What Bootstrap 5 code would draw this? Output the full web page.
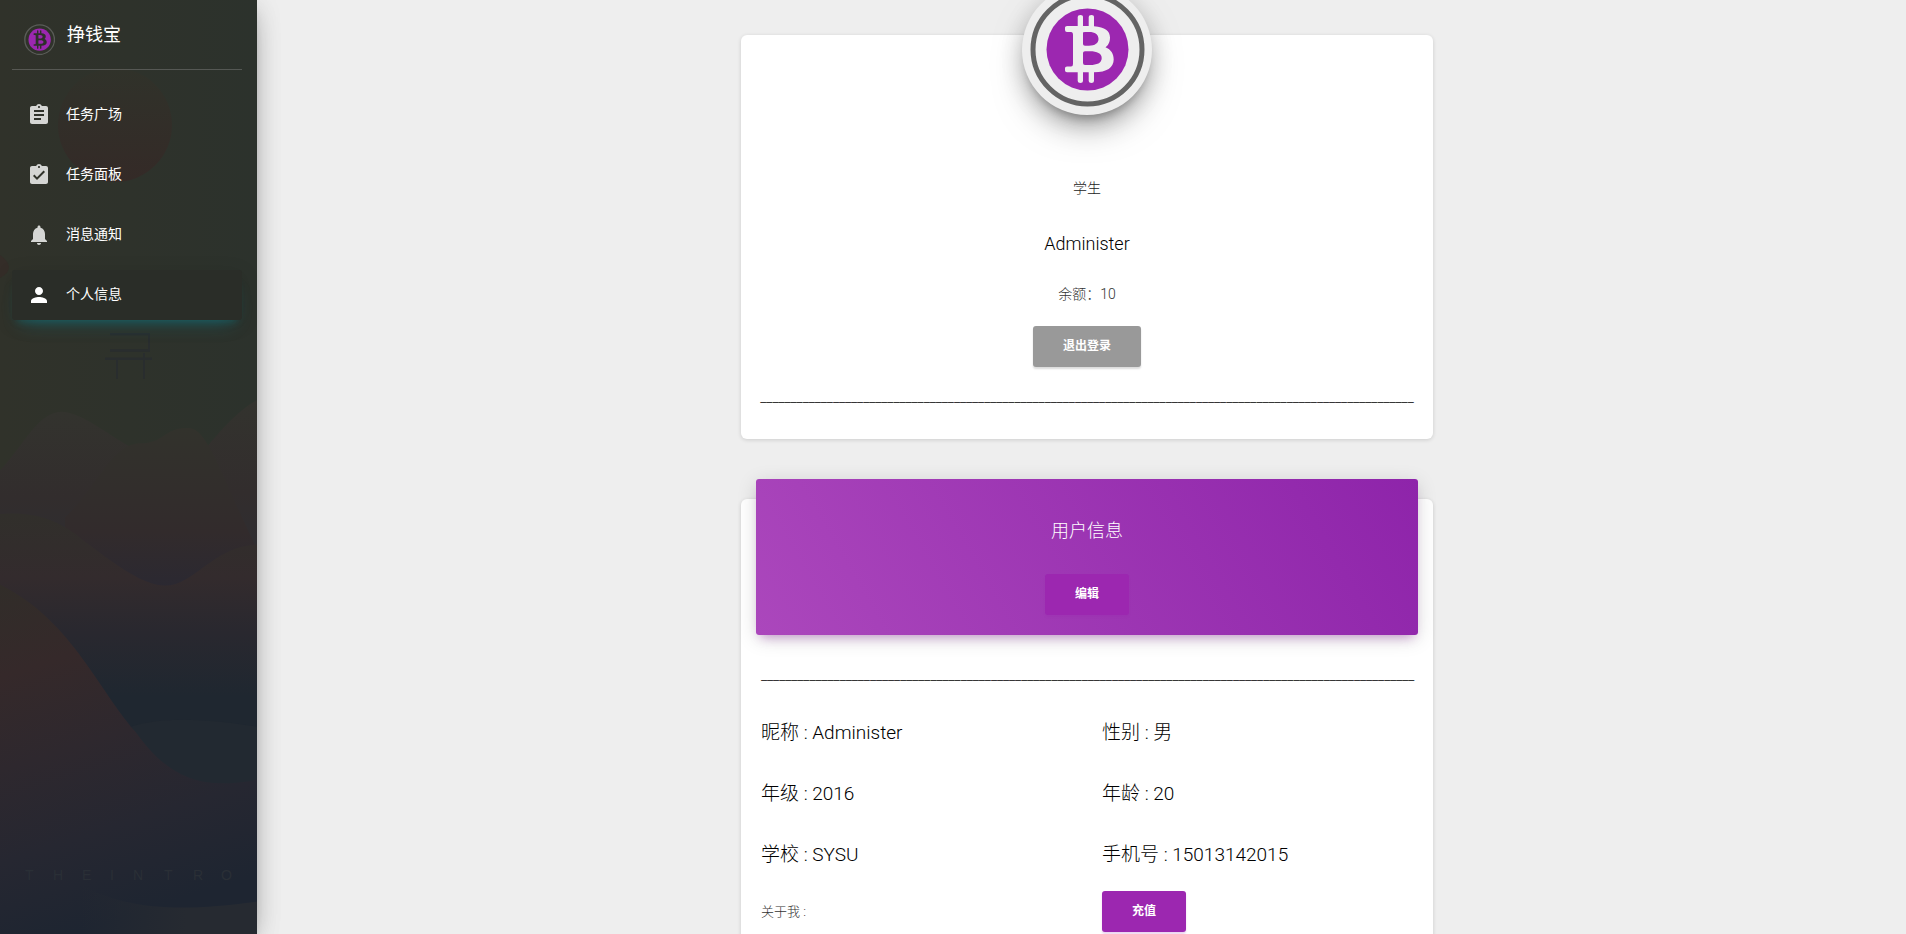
<!DOCTYPE html>
<html lang="zh-CN">
<head>
<meta charset="utf-8">
<meta name="viewport" content="width=device-width, initial-scale=1">
<title>挣钱宝</title>
<link rel="stylesheet" href="https://cdn.jsdelivr.net/npm/bootstrap@5.3.0/dist/css/bootstrap.min.css">
<style>
  body { background: #eee; color: #222; font: 300 14px/20px Roboto, "Noto Sans CJK SC", sans-serif; }
  .side-panel { width: 257px; background: #2d312a; box-shadow: 0 10px 30px -12px rgba(0,0,0,.42), 0 4px 25px 0 rgba(0,0,0,.12), 0 8px 10px -5px rgba(0,0,0,.2); z-index: 2; color: #fff; padding: 0 15px 0 12px; }
  .scenery { z-index: -1; }
  .brand-row { height: 70px; padding: 0 12px; gap: 12px; border-bottom: 1px solid rgba(180,180,180,.3); font-size: 18px; font-weight: 400; --coin-ring: #5a5c58; --coin-sign: #2e302a; }
  .brand-row svg { margin-top: 9px; }
  .side-links { gap: 10px; margin-top: 20px; }
  .side-links .nav-link { height: 50px; padding: 0 15px 2px; gap: 15px; color: #fff; font-weight: 400; border-radius: 3px; }
  .side-links svg { fill: #d5d6d4; margin-top: 2px; }
  .side-links .active { background: #2a2d28; box-shadow: 0 12px 20px -10px rgba(0,188,212,.28), 0 4px 20px 0 rgba(0,0,0,.12), 0 7px 8px -5px rgba(0,188,212,.2); }
  .side-links .active svg { fill: #fff; }
  .content-pane { padding: 35px 0 0 11px; }
  .profile-column { width: 692px; max-width: 100%; gap: 60px; }
  .panel-card { border: 0; border-radius: 6px; padding: 0 20px; box-shadow: 0 1px 4px 0 rgba(0,0,0,.14); color: #000; }
  .avatar-coin { width: 130px; height: 130px; margin-top: -50px; background: #eee; --coin-ring: #646464; --coin-sign: #eee; box-shadow: 0 16px 38px -12px rgba(0,0,0,.56), 0 4px 25px 0 rgba(0,0,0,.12), 0 8px 10px -5px rgba(0,0,0,.2); }
  .title-text { font-size: 18px; line-height: 28px; font-weight: 300; }
  .role-text { margin-top: 63px; color: #222; }
  .name-text { margin-top: 32px; }
  .balance-text { margin-top: 26px; color: #333; }
  .btn-flat { height: 41px; padding: 0 30px 2px; border: 0; border-radius: 3px; font-size: 12px; font-weight: 700; color: #fff; box-shadow: 0 2px 2px 0 rgba(0,0,0,.14); }
  .btn-flat:hover { color: #fff; }
  .btn-grey { background: #999; margin-top: 22px; }
  .btn-violet { background: #9c27b0; box-shadow: 0 2px 2px 0 rgba(156,39,176,.2); }
  .rule-text { white-space: nowrap; margin: 20px 0 32px; }
  .info-header { margin: -20px -5px 10px; padding: 38px 0 20px; border-radius: 3px; color: #fff; background: linear-gradient(60deg, #ab47bc, #8e24aa); box-shadow: 0 4px 20px 0 rgba(0,0,0,.14), 0 7px 10px -5px rgba(156,39,176,.4); gap: 29px; }
  .info-grid { --bs-gutter-x: 30px; row-gap: 33px; margin-top: 2px; font-size: 19px; line-height: 28px; }
  .about-text { color: #333; padding-top: 11px; font-size: 13px; }
  .last-row { margin-top: 22px; padding-bottom: 40px; --bs-gutter-x: 30px; }
</style>
<script src="https://cdn.jsdelivr.net/npm/bootstrap@5.3.0/dist/js/bootstrap.bundle.min.js"></script>
</head>
<body>
<svg class="d-none">
  <symbol id="coin" viewBox="0 0 130 130">
    <circle cx="65.500" cy="64.500" r="54.500" fill="none" stroke="var(--coin-ring)" stroke-width="5"/>
    <circle cx="65.500" cy="64.500" r="41" fill="#9c27b0"/>
    <path fill="var(--coin-sign)" fill-rule="evenodd" d="M43 42.500Q43 41 45 41H55.700V32Q55.700 30 58.400 30T61 32V41H66.700V32Q66.700 30 69.400 30T72 32V41.300C83 42 88 46 88 52.500C88 57.500 86 60.500 83.500 62.300C89 64.500 91.700 69 91.700 74.500C91.700 82.500 85 87.300 72 87.300V96Q72 98 69.400 98T66.700 96V87.300H61V96Q61 98 58.400 98T55.700 96V87.300H45Q43 87.300 43 85.500V83Q43 81.500 45 81.500H49Q51 81.500 51 79V50Q51 47 49 47H45Q43 47 43 45ZM61 47.500V59Q61 60.700 63 60.700H67C73 60.700 76.500 58 76.500 54C76.500 49.500 73 47 67 47H63Q61 47 61 47.500ZM61 68V78Q61 80 63 80H68C75 80 79.700 78 79.700 73C79.700 68.500 75 66.300 68 66.300H63Q61 66.300 61 68Z"/>
  </symbol>
</svg>
<div class="d-flex vh-100 overflow-hidden">
  <aside class="side-panel position-relative flex-shrink-0">
    <svg class="scenery position-absolute top-0 start-0 w-100 h-100" viewBox="0 0 257 934" preserveAspectRatio="xMidYMid slice" aria-hidden="true">
      <defs>
        <linearGradient id="sky"><stop offset="0" stop-color="#30322a"/><stop offset="1" stop-color="#2c322c"/></linearGradient>
        <linearGradient id="sun" x2="0" y2="1"><stop offset="0" stop-color="#30322a"/><stop offset="1" stop-color="#342a27"/></linearGradient>
        <linearGradient id="far" x2="0" y2="1"><stop offset="0" stop-color="#33332e"/><stop offset=".6" stop-color="#322d2d"/><stop offset="1" stop-color="#2e2d31"/></linearGradient>
        <linearGradient id="peak" x2="0" y2="1"><stop offset="0" stop-color="#32322c"/><stop offset=".6" stop-color="#322b2c"/><stop offset="1" stop-color="#292833"/></linearGradient>
        <linearGradient id="mid" gradientUnits="userSpaceOnUse" x1="0" y1="485" x2="0" y2="640"><stop offset="0" stop-color="#312f2b"/><stop offset=".35" stop-color="#332b2d"/><stop offset=".65" stop-color="#29282f"/><stop offset="1" stop-color="#1f2730"/></linearGradient>
        <linearGradient id="near" gradientUnits="userSpaceOnUse" x1="0" y1="545" x2="80" y2="840"><stop offset="0" stop-color="#312d29"/><stop offset=".25" stop-color="#35292a"/><stop offset=".5" stop-color="#2e282e"/><stop offset=".75" stop-color="#262731"/><stop offset="1" stop-color="#1e2531"/></linearGradient>
        <linearGradient id="shore"><stop offset="0" stop-color="#262a31" stop-opacity="0"/><stop offset=".6" stop-color="#262a31"/></linearGradient>
      </defs>
      <path fill="url(#sky)" d="M0 0H257V934H0Z"/>
      <circle cx="115" cy="125" r="57" fill="url(#sun)"/>
      <path fill="#342d28" d="M0 255Q18 268 0 278Z"/>
      <g transform="translate(0 -56) scale(1 1.175)">
        <path d="M110 332H149V346H110M105 353H152M117 353V370M144 348V370" fill="none" stroke="#292d2e" stroke-width="2"/>
        <path fill="url(#far)" d="M0 448C25 425 38 398 62 398C85 399 110 420 140 432L120 520H0Z"/>
        <path fill="url(#far)" d="M205 430Q235 398 257 388V520H180Z"/>
        <path fill="url(#peak)" d="M65 488C95 465 112 425 140 425C165 425 165 410 190 412C208 414 220 450 257 515V560H65Z"/>
        <path fill="url(#mid)" d="M0 485Q45 482 75 502C120 532 145 546 165 546C195 546 212 513 257 511V730H0Z"/>
        <path fill="#222931" d="M115 672Q155 652 257 666V730H115Z"/>
        <path fill="url(#near)" d="M0 545C70 575 95 630 135 670C165 705 195 722 257 711V850H0Z"/>
        <path fill="url(#shore)" d="M80 800C125 822 180 824 257 815V850H80Z"/>
      </g>
      <text x="25 53 82 110 133 164 193 221" y="880" font-family="Liberation Sans" font-size="14" fill="#2a2f36">THEINTRO</text>
    </svg>
    <div class="brand-row d-flex align-items-center">
      <svg width="31" height="31" viewBox="8 7 114 114" aria-hidden="true"><use href="#coin" width="130" height="130"/></svg>
      <span>挣钱宝</span>
    </div>
    <nav class="side-links nav flex-column">
      <a class="nav-link d-flex align-items-center" href="#"><svg width="24" height="24" viewBox="0 0 24 24"><path d="M19 3h-4.180C14.400 1.840 13.300 1 12 1c-1.300 0-2.400.84-2.820 2H5c-1.100 0-2 .9-2 2v14c0 1.100.9 2 2 2h14c1.100 0 2-.9 2-2V5c0-1.100-.9-2-2-2zm-7 0c.55 0 1 .45 1 1s-.45 1-1 1-1-.45-1-1 .45-1 1-1zm2 14H7v-2h7v2zm3-4H7v-2h10v2zm0-4H7V7h10v2z"/></svg>任务广场</a>
      <a class="nav-link d-flex align-items-center" href="#"><svg width="24" height="24" viewBox="0 0 24 24"><path d="M19 3h-4.180C14.400 1.840 13.300 1 12 1c-1.300 0-2.400.84-2.820 2H5c-1.100 0-2 .9-2 2v14c0 1.100.9 2 2 2h14c1.100 0 2-.9 2-2V5c0-1.100-.9-2-2-2zm-7 0c.55 0 1 .45 1 1s-.45 1-1 1-1-.45-1-1 .45-1 1-1zm-2 14l-4-4 1.410-1.410L10 14.170l6.590-6.590L18 9l-8 8z"/></svg>任务面板</a>
      <a class="nav-link d-flex align-items-center" href="#"><svg width="24" height="24" viewBox="0 0 24 24"><path d="M12 22c1.100 0 2-.9 2-2h-4c0 1.100.89 2 2 2zm6-6v-5c0-3.070-1.640-5.640-4.500-6.320V4c0-.83-.67-1.500-1.500-1.500s-1.500.67-1.500 1.500v.68C7.630 5.360 6 7.920 6 11v5l-2 2v1h16v-1l-2-2z"/></svg>消息通知</a>
      <a class="nav-link active d-flex align-items-center" aria-current="page" href="#"><svg width="24" height="24" viewBox="0 0 24 24"><path d="M12 12c2.210 0 4-1.790 4-4s-1.790-4-4-4-4 1.790-4 4 1.790 4 4 4zm0 2c-2.670 0-8 1.340-8 4v2h16v-2c0-2.660-5.330-4-8-4z"/></svg>个人信息</a>
    </nav>
  </aside>
  <main class="content-pane flex-grow-1">
    <div class="profile-column mx-auto d-flex flex-column">
      <section class="panel-card card align-items-center">
        <svg class="avatar-coin rounded-circle" role="img" aria-label="头像"><use href="#coin" width="130" height="130"/></svg>
        <div class="role-text">学生</div>
        <h1 class="name-text title-text mb-0">Administer</h1>
        <div class="balance-text">余额：10</div>
        <button type="button" class="btn btn-flat btn-grey">退出登录</button>
        <div class="rule-text">____________________________________________________________________________________________________________</div>
      </section>
      <section class="panel-card card">
        <header class="info-header d-flex flex-column align-items-center">
          <h2 class="title-text mb-0">用户信息</h2>
          <button type="button" class="btn btn-flat btn-violet">编辑</button>
        </header>
        <div class="rule-text">____________________________________________________________________________________________________________</div>
        <div class="info-grid row row-cols-2">
          <div class="col">昵称 : Administer</div>
          <div class="col">性别 : 男</div>
          <div class="col">年级 : 2016</div>
          <div class="col">年龄 : 20</div>
          <div class="col">学校 : SYSU</div>
          <div class="col">手机号 : 15013142015</div>
        </div>
        <div class="last-row row row-cols-2">
          <div class="col about-text">关于我 :</div>
          <div class="col"><button type="button" class="btn btn-flat btn-violet">充值</button></div>
        </div>
      </section>
    </div>
  </main>
</div>
</body>
</html>
